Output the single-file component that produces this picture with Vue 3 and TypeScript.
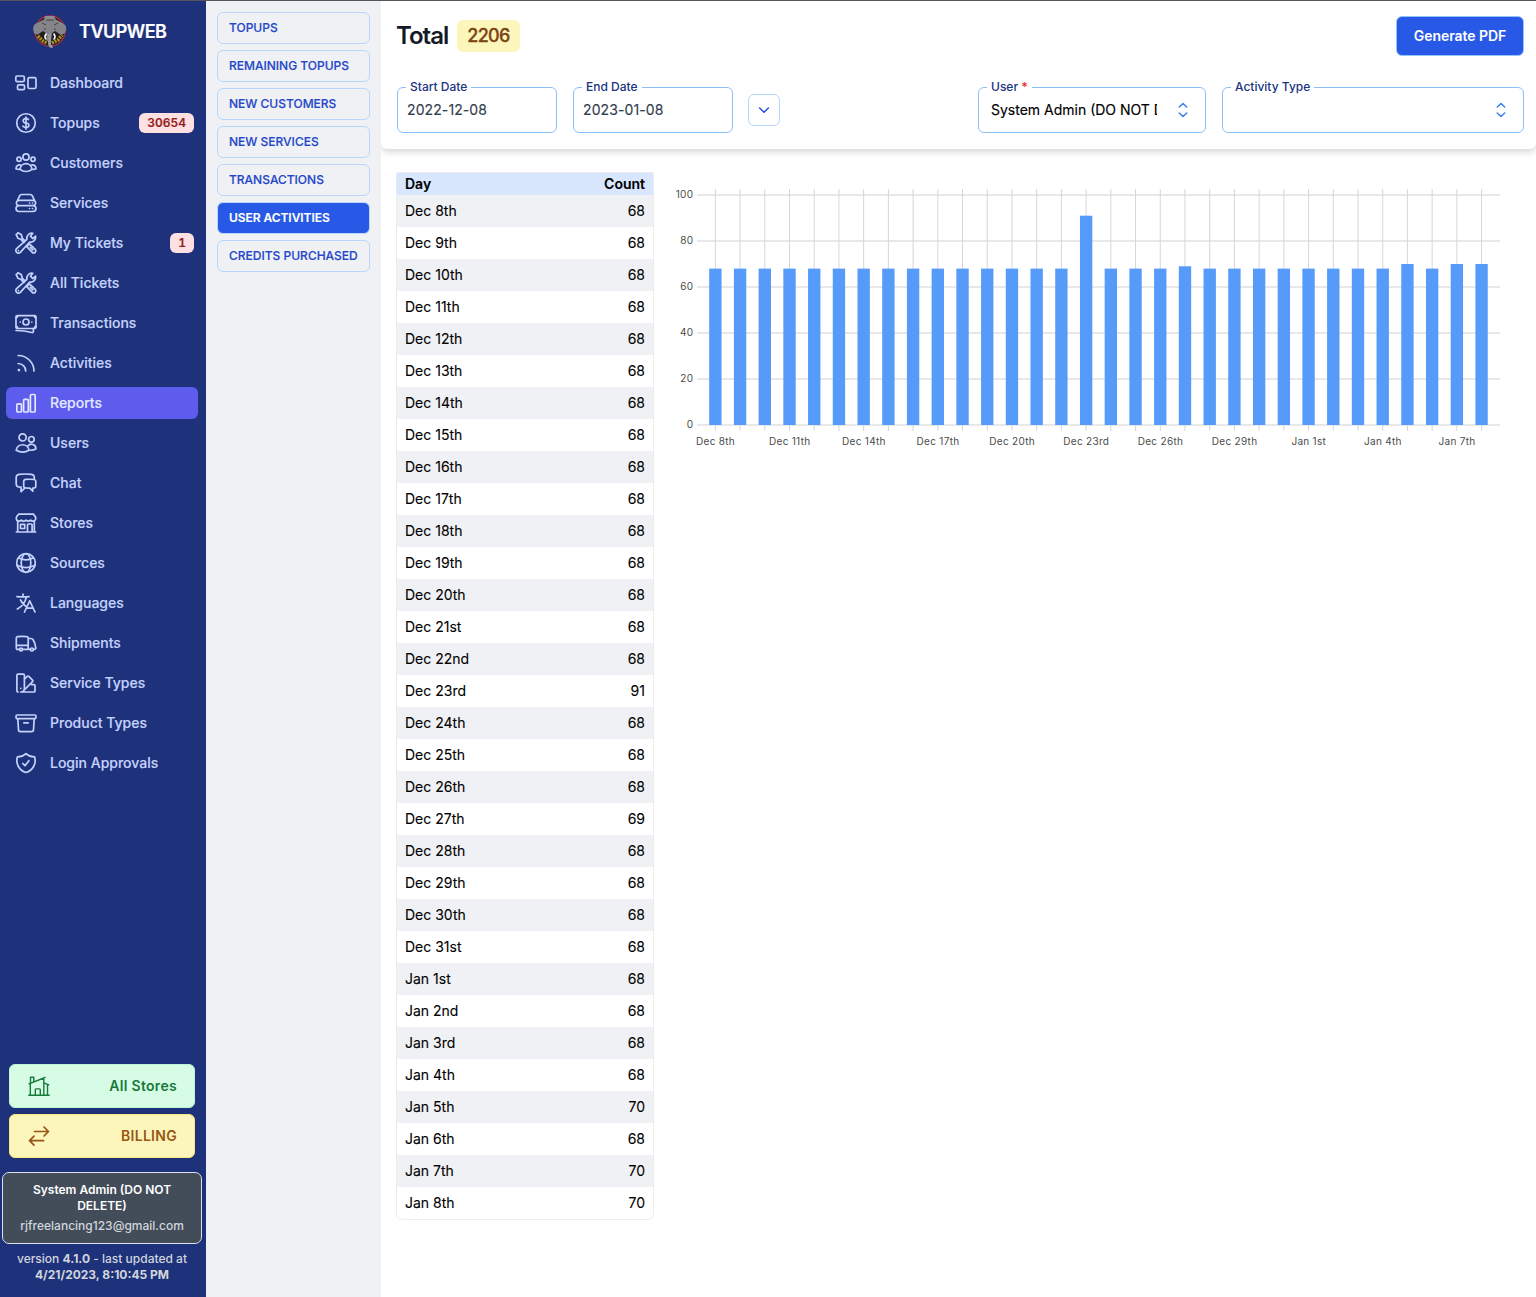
<script setup lang="ts">
interface NavItem {
  label: string
  icon: string
  badge?: string
}

const tools =
  '<path d="M2.200 3.600 4 1.800l3.400 2 .8 3.300 3 3M10 11.600 6.700 8.200 3.900 7.200 2.200 3.600M14 14.400l1.600-1.500 5.600 5.500a2 2 0 0 1-2.900 2.900l-5.600-5.600 1.300-1.300M16.200 16.200l2.600 2.600M21.600 5.200l-2.900 2.300-2.200-2.200 2.200-3A5 5 0 0 0 12.900 8.300L2.600 17.700a2.500 2.500 0 1 0 3.700 3.700L15.700 11a5 5 0 0 0 5.900-5.800z"/><path d="M4.400 19.600h.02"/>'

const nav: NavItem[] = [
  { label: 'Dashboard', icon: '<rect x="1.800" y="5" width="8.500" height="5.600" rx="1.400"/><rect x="3.500" y="13.800" width="7" height="4.900" rx="1.400"/><rect x="14" y="6.700" width="8" height="10.800" rx="1.500"/>' },
  { label: 'Topups', badge: '30654', icon: '<circle cx="12" cy="12" r="9.250"/><path d="M12 6v12M9 15.200l.9.650c1.200.880 3.100.880 4.200 0 1.200-.880 1.200-2.300 0-3.180C13.600 12.200 12.800 12 12 12c-.75 0-1.450-.220-2-.660-1.100-.880-1.100-2.300 0-3.180 1.100-.880 2.900-.880 4 0l.4.330"/>' },
  { label: 'Customers', icon: '<circle cx="12" cy="6" r="3.100"/><circle cx="5" cy="8.300" r="2.100"/><circle cx="19" cy="8.300" r="2.100"/><path d="M6.100 18.400c.2-3.300 2.700-5.700 5.900-5.700s5.700 2.400 5.900 5.700c-1.600 1.400-3.600 2.100-5.900 2.100s-4.300-.7-5.900-2.100zM5.900 18.400c-1.500.1-2.800-.1-3.900-.7-.1-2.600 2.300-4.600 5.200-3.500M18.100 18.400c1.500.1 2.800-.1 3.900-.7.100-2.600-2.300-4.600-5.200-3.500"/>' },
  { label: 'Services', icon: '<path d="M5 9.400h14a2.500 2.500 0 0 1 2.600 2.600 2.500 2.500 0 0 1-2.600 2.600H5A2.500 2.500 0 0 1 2.400 12 2.500 2.500 0 0 1 5 9.400zM5 14.600h14a2.600 2.600 0 0 1 0 5.900H5a2.600 2.600 0 0 1 0-5.900zM2.700 11l2.500-5.100A3 3 0 0 1 7.900 3.500h8.200a3 3 0 0 1 2.700 2.400l2.500 5.100M15.500 12h.02M18.500 12h.02M15.500 17.500h.02M18.500 17.500h.02"/>' },
  { label: 'My Tickets', badge: '1', icon: tools },
  { label: 'All Tickets', icon: tools },
  { label: 'Transactions', icon: '<rect x="2" y="4.700" width="20" height="12.800" rx="1.300"/><circle cx="12" cy="11" r="3"/><path d="M2 19.500c5.500 0 10.800.6 16 2 .7.200 1.400-.3 1.400-1v-2.700M2.200 6.500c1 0 1.500-.5 1.500-1.500M21.800 6.500c-1 0-1.500-.5-1.500-1.500M2.200 15.700c1 0 1.500.5 1.500 1.500M21.800 15.700c-1 0-1.500.5-1.500 1.500M6.200 11h.02M17.800 11h.02"/>' },
  { label: 'Activities', icon: '<path d="M4.200 12.500a7.600 7.600 0 0 1 7.500 7.500M4.200 4.500A15.700 15.700 0 0 1 20 20M4.800 19.200h.02"/><circle cx="4.900" cy="19.100" r=".5"/>' },
  { label: 'Reports', icon: '<rect x="2.800" y="12.800" width="4.700" height="8.200" rx="1.100"/><rect x="9.600" y="8.300" width="4.700" height="12.700" rx="1.100"/><rect x="16.400" y="3.500" width="4.800" height="17.500" rx="1.100"/>' },
  { label: 'Users', icon: '<circle cx="8.600" cy="6.400" r="3.600"/><circle cx="17.400" cy="8.300" r="2.800"/><path d="M15 19.200v-.1a6.500 6.500 0 0 0-12.800 0v.1a12.300 12.300 0 0 0 12.800 0zM15 19.100c2.400.4 4.800 0 6.800-1a4.400 4.400 0 0 0-7.900-3.200"/>' },
  { label: 'Chat', icon: '<path d="M20.300 8.500c.9.300 1.500 1.100 1.500 2.100v4.300c0 1.100-.8 2-2 2.100l-1 .1v3.100l-3-3c-1.400 0-2.700-.1-4-.2-1.200-.1-2.100-1-2.100-2.100v-4.300c0-1.200.9-2.100 2.100-2.200a48 48 0 0 1 8.500.1zM20.300 8.500V6.600c0-1.600-1.200-3-2.800-3.200a50 50 0 0 0-12.600 0C3.300 3.600 2.200 5 2.200 6.600v6.200c0 1.600 1.100 3 2.700 3.200l2.200.2v4.500l4.100-4"/>' },
  { label: 'Stores', icon: '<path d="M13.500 21v-7.200c0-.4.300-.8.800-.8h3c.4 0 .8.400.8.800V21M2.400 21h19.200M3.700 21V9.600M20.300 21V9.600M4.700 3.100h14.600l2 2.400c1.200 2.400.1 4.600-2.400 4.600-1 0-1.800-.4-2.300-1-1.300 1.300-3.200 1.300-4.600 0-1.300 1.300-3.300 1.300-4.600 0-1.600 1.900-5 1.300-5.200-1.700-.1-1.500.6-2.600 2.500-4.300zM6.500 13.300h4.200v4.200H6.500z"/>' },
  { label: 'Sources', icon: '<circle cx="12" cy="12" r="9.300"/><ellipse cx="12" cy="12" rx="4.800" ry="9.300"/><path d="M4.600 6.800c4.700 2.700 10.100 2.700 14.800 0M3 14.300c5.700 2.900 12.300 2.900 18 0"/>' },
  { label: 'Languages', icon: '<path d="m10.500 21 5.200-11.200L21 21M12.200 17.200h7M3 5.600c4 .5 8 .5 12 0M9 3v2.400M12.400 5.800A18 18 0 0 1 3.400 18M6.500 9a17 17 0 0 0 5 6"/>' },
  { label: 'Shipments', icon: '<path d="M5.700 18.400H3.500c-.7 0-1.200-.5-1.200-1.200V7.100c0-.8.500-1.400 1.300-1.500a46 46 0 0 1 9.200 0c.8.100 1.400.7 1.400 1.500v11.300H8.500M14.200 7.500h2.700c1 0 1.700.4 2.200 1.200a17 17 0 0 1 2.700 8.400c0 .8-.5 1.300-1.200 1.300h-1M16.500 18.400H8.300M2.300 14.300h11.900"/><circle cx="7" cy="18.500" r="1.500"/><circle cx="17.900" cy="18.500" r="1.500"/>' },
  { label: 'Service Types', icon: '<path d="M4.100 21a1.200 1.200 0 0 1-1.200-1.200V4.200c0-.6.500-1.100 1.100-1.100h5.300c.6 0 1.100.5 1.100 1.100v13.100A3.700 3.700 0 0 1 6.700 21h13.100c.7 0 1.200-.5 1.200-1.100v-5.200c0-.6-.5-1.100-1.100-1.100h-2.300M10.400 8.200l2.800-2.800c.5-.5 1.200-.5 1.600 0l3.700 3.700c.5.500.5 1.200 0 1.600L9.300 20M6.700 17.300h.02"/>' },
  { label: 'Product Types', icon: '<rect x="2.100" y="4" width="19.800" height="3.700" rx=".9"/><path d="m3.800 7.800.7 10.900a2 2 0 0 0 2 1.900h11a2 2 0 0 0 2-1.900l.7-10.900M9.800 11.800h4.400"/>' },
  { label: 'Login Approvals', icon: '<path d="m8.800 12.500 2.200 2.200 3.900-5M12 2.600a12 12 0 0 1-8.600 3.300A12.400 12.400 0 0 0 12 21.500 12.400 12.400 0 0 0 20.600 5.900 12 12 0 0 1 12 2.600z"/>' },
]

const reports = ['Topups', 'Remaining Topups', 'New Customers', 'New Services', 'Transactions', 'User Activities', 'Credits Purchased']

const exceptions: Record<string, number> = { 'Dec 23rd': 91, 'Dec 27th': 69, 'Jan 5th': 70, 'Jan 7th': 70, 'Jan 8th': 70 }

function ordinal(n: number): string {
  if (n > 10 && n < 14) return `${n}th`
  return `${n}${['th', 'st', 'nd', 'rd'][n % 10] ?? 'th'}`
}

const days = Array.from({ length: 32 }, (_, i) => {
  const name = i < 24 ? `Dec ${ordinal(i + 8)}` : `Jan ${ordinal(i - 23)}`
  return { name, count: exceptions[name] ?? 68 }
})

const total = days.reduce((sum, d) => sum + d.count, 0)

const STEP = 24.717
const centre = (i: number): number => 45.36 + i * STEP
const level = (v: number): number => 255 - v * 2.3
</script>

<template>
  <div class="app">
    <aside class="sidebar">
      <div class="brand">
        <svg class="logo" width="36" height="36" viewBox="0 0 36 36">
          <circle cx="18" cy="17" r="15" fill="#211d20" stroke="#b52c38" stroke-width="1.300" />
          <path d="M6 22l5 5 4 2M20 29l6-3 4-5" stroke="#a8961f" stroke-width="3.500" stroke-dasharray="2 1" fill="none" />
          <path d="M13 2h9l2 4H12z" fill="#8d8d90" />
          <path d="M11 6q7-2 14 0l7 4q4 3 1 9-4 3-7 0l-3-2-3 2-1 8h-4l-1-8-3-2-3 2q-3 3-6 0Q0 13 3 10z" fill="#858589" />
          <path d="M10 9l4 2M22 11l4-2M14 6h8M12 15h2M22 15h2" stroke="#444" stroke-width="1" />
          <path d="M14 20q-2 3 0 5M22 20q2 3 0 5" stroke="#fff" stroke-width="1.600" stroke-linecap="round" fill="none" />
          <path d="M17.500 20v9q0 4 3 3.500" stroke="#98989b" stroke-width="3" fill="none" />
        </svg>
        <span>TVUPWEB</span>
      </div>
      <nav class="menu">
        <a v-for="item in nav" :key="item.label" class="item" :class="{ active: item.label === 'Reports' }">
          <svg class="icon" viewBox="0 0 24 24" v-html="item.icon"></svg>
          <span class="label">{{ item.label }}</span>
          <b v-if="item.badge" class="badge">{{ item.badge }}</b>
        </a>
      </nav>
      <div class="bottom">
        <button class="wide green">
          <svg class="icon thin" viewBox="0 0 24 24"><path d="M1.800 21.200h20.400M3.300 21V9.300M2 9.800l16-6.300M3.500 8.800V3.300h3.300v4.300M16.800 4v17M16.800 8.800l5 2M20.500 10.700V21M8.300 21v-5.300c0-.5.300-.8.800-.8h3.400c.5 0 .8.300.8.800V21" /></svg>
          <span class="label">All Stores</span>
        </button>
        <button class="wide yellow">
          <svg class="icon" viewBox="0 0 24 24"><path d="m17 3 4.500 4.500L17 12M21.200 7.500H7.500M7 12.200l-4.500 4.500L7 21.200M2.800 16.700h13.700" /></svg>
          <span class="label">BILLING</span>
        </button>
        <div class="account">
          <strong>System Admin (DO NOT DELETE)</strong>
          <span>rjfreelancing123@gmail.com</span>
        </div>
        <p class="version">version <b>4.1.0</b> - last updated at<br /><b>4/21/2023, 8:10:45 PM</b></p>
      </div>
    </aside>

    <aside class="reports">
      <a v-for="name in reports" :key="name" class="report" :class="{ current: name === 'User Activities' }">{{ name }}</a>
    </aside>

    <main class="main">
      <header class="head">
        <div class="title-row">
          <h1>Total</h1>
          <span class="total">{{ total }}</span>
          <button class="pdf">Generate PDF</button>
        </div>
        <div class="filters">
          <fieldset class="field date"><legend>Start Date</legend><span>2022-12-08</span></fieldset>
          <fieldset class="field date"><legend>End Date</legend><span>2023-01-08</span></fieldset>
          <button class="more"><svg width="14" height="14" viewBox="0 0 14 14"><path d="m2.600 5 4.400 4.300L11.400 5" /></svg></button>
          <fieldset class="field user">
            <legend>User <i>*</i></legend><span class="value">System Admin (DO NOT DELETE)</span>
            <svg class="updown" width="12" height="16" viewBox="0 0 12 16"><path d="m2.300 5 3.700-3.500L9.700 5M2.300 11 6 14.500 9.700 11" /></svg>
          </fieldset>
          <fieldset class="field type">
            <legend>Activity Type</legend><span class="value"></span>
            <svg class="updown" width="12" height="16" viewBox="0 0 12 16"><path d="m2.300 5 3.700-3.500L9.700 5M2.300 11 6 14.500 9.700 11" /></svg>
          </fieldset>
        </div>
      </header>

      <section class="content">
        <div class="table">
          <div class="row th"><span>Day</span><span>Count</span></div>
          <div v-for="d in days" :key="d.name" class="row"><span>{{ d.name }}</span><span>{{ d.count }}</span></div>
        </div>
        <svg class="chart" width="840" height="290" viewBox="0 0 840 290">
          <line v-for="v in [0, 20, 40, 60, 80, 100]" :key="v" x1="27" x2="830" :y1="level(v)" :y2="level(v)" stroke="#e8e8e8" stroke-width="2" />
          <line v-for="(d, i) in days" :key="d.name" :x1="centre(i)" :x2="centre(i)" y1="19" y2="261" stroke="#d6d6d6" stroke-width="1" />
          <rect v-for="(d, i) in days" :key="d.name" :x="centre(i) - 6.180" :y="level(d.count)" width="12.360" :height="d.count * 2.3" fill="#569bfa" />
          <text v-for="v in [0, 20, 40, 60, 80, 100]" :key="v" x="23.300" :y="level(v) + 3.300" text-anchor="end">{{ v }}</text>
          <template v-for="(d, i) in days" :key="d.name">
            <text v-if="i % 3 === 0" :x="centre(i) + 0.2" y="275" text-anchor="middle">{{ d.name }}</text>
          </template>
        </svg>
      </section>
    </main>
  </div>
</template>

<style>
body { margin: 0; background: #fff; }
</style>

<style scoped>
* { box-sizing: border-box; }
.app { display: flex; height: 1297px; border-top: 1px solid #56545c; font-family: Inter, "Liberation Sans", sans-serif; font-size: 14px; color: #000; overflow: hidden; }
button { font: inherit; }
svg { flex: none; }
.sidebar { width: 206px; flex: none; background: #1e327b; display: flex; flex-direction: column; }
.brand { display: flex; align-items: center; height: 62px; padding-left: 32px; gap: 11px; color: #fff; font-size: 18px; font-weight: 600; letter-spacing: -0.5px; }
.brand span { padding-bottom: 2px; -webkit-text-stroke: 0.2px; }
.menu { display: flex; flex-direction: column; gap: 8px; padding: 4px 8px 0 6px; }
.item { display: flex; align-items: center; height: 32px; padding: 0 4px 0 8px; gap: 12px; border-radius: 6px; color: #c5d2fc; font-weight: 500; -webkit-text-stroke: 0.15px; }
.label { padding-bottom: 2px; }
.item.active { background: #5d5ced; color: #e2e8ff; }
.icon { width: 24px; height: 24px; fill: none; stroke: currentColor; stroke-width: 1.7; stroke-linecap: round; stroke-linejoin: round; }
.thin { stroke-width: 1.4; }
.badge { margin-left: auto; height: 20px; padding: 0 8px; border-radius: 6px; background: #fde1e2; color: #951d20; font-size: 12px; font-weight: 600; line-height: 20px; font-variant-numeric: tabular-nums; }
.bottom { margin-top: auto; display: flex; flex-direction: column; padding: 0 4px 14px 2px; }
.wide { display: flex; align-items: center; justify-content: space-between; height: 44px; margin: 0 7px 6px; padding: 0 17px; border: 1px solid; border-radius: 6px; font-weight: 600; letter-spacing: 0.3px; }
.green { background: #d7fce6; border-color: #b9f7d2; color: #157a3a; }
.yellow { background: #fdf6bc; border-color: #fbe878; color: #975613; }
.account { display: flex; flex-direction: column; gap: 4px; height: 72px; margin-top: 8px; padding: 9px 12px 0; border: 1px solid #dfe1e6; border-radius: 7px; background: #434d5a; text-align: center; font-size: 12px; line-height: 16px; color: #d2d5db; font-weight: 500; }
.account strong { color: #fff; font-weight: 600; }
.version { margin: 7px 0 0; text-align: center; color: #d1d5db; font-size: 12px; line-height: 16px; font-weight: 500; }
.version b { font-weight: 650; }
.reports { width: 175px; flex: none; padding: 11px 11px 0; background: #f0f1f5; display: flex; flex-direction: column; gap: 6px; }
.report { height: 32px; padding-left: 11px; line-height: 30px; border: 1px solid #b8d7fc; border-radius: 6px; color: #2447c9; font-size: 12px; font-weight: 500; text-transform: uppercase; white-space: nowrap; -webkit-text-stroke: 0.15px; }
.report.current { background: #2759e6; color: #fff; font-weight: 600; letter-spacing: -0.05px; }
.main { flex: 1; min-width: 0; background: #fff; overflow: hidden; }
.head { height: 148px; padding: 15px 12px 0 16px; border-radius: 0 0 6px 6px; box-shadow: 0 3px 6px rgba(0, 0, 0, 0.16); }
.title-row { display: flex; align-items: center; height: 40px; }
h1 { margin: 0 9px 2px -1px; font-size: 24px; font-weight: 600; letter-spacing: -1px; color: #151a28; }
.total { height: 32px; padding: 0 10px; border-radius: 6px; background: #fdf6bb; color: #7b4415; font-size: 18px; line-height: 32px; font-weight: 500; letter-spacing: -0.65px; -webkit-text-stroke: 0.3px; }
.pdf { margin-left: auto; width: 128px; height: 40px; border: 1px solid #92c4fc; border-radius: 6px; background: #2759e6; color: #fff; font-weight: 600; padding: 0 0 2px; letter-spacing: -0.05px; }
.filters { display: flex; margin-top: 23px; }
.field { min-width: 0; height: 54px; margin: 0 16px 0 0; padding: 0 9px; border: 1px solid #8bbff8; border-radius: 6px; display: flex; align-items: flex-start; color: #333e4d; }
.field legend { height: 16px; padding: 0 4px; margin-left: -1px; font-size: 12px; line-height: 16px; font-weight: 500; color: #20357f; }
.field legend i { color: #ef3535; font-style: normal; font-weight: 700; }
.field > span { line-height: 20px; margin-top: 5px; -webkit-text-stroke: 0.15px; }
.date { width: 160px; }
.date > span { letter-spacing: 0.1px; }
.more { width: 32px; height: 32px; margin: 15px 0 0 -1px; padding: 0; border: 1px solid #b8d7fc; border-radius: 6px; background: #fff; display: flex; align-items: center; justify-content: center; }
.more path { fill: none; stroke: #2956d8; stroke-width: 1.6; stroke-linecap: round; stroke-linejoin: round; }
.user { width: 228px; margin-left: auto; }
.type { width: 302px; margin-right: 0; }
.user, .type { padding: 0 16px 0 12px; color: #000; }
.user legend, .type legend { margin-left: -4px; }
.field .value { flex: 1; max-width: 166px; overflow: hidden; white-space: nowrap; }
.type .value { max-width: none; }
.updown { margin: 7px 0 0 auto; }
.updown path { fill: none; stroke: #3f82f0; stroke-width: 1.6; stroke-linecap: round; stroke-linejoin: round; }
.content { display: flex; align-items: flex-start; padding: 23px 0 0 15px; }
.table { width: 258px; flex: none; border: 1px solid #ececef; border-radius: 2px 2px 6px 6px; overflow: hidden; -webkit-text-stroke: 0.1px; }
.row { display: flex; justify-content: space-between; padding: 0 8px; height: 32px; line-height: 32px; }
.row:nth-child(even) { background: #f0f1f5; }
.row.th { height: 22px; line-height: 22px; background: #d8e7fd; font-weight: 600; }
.chart { margin: -2px 0 0 16px; }
.chart text { font-family: Inter, sans-serif; font-size: 10px; fill: #4a4c4a; letter-spacing: 0.3px; }
</style>
